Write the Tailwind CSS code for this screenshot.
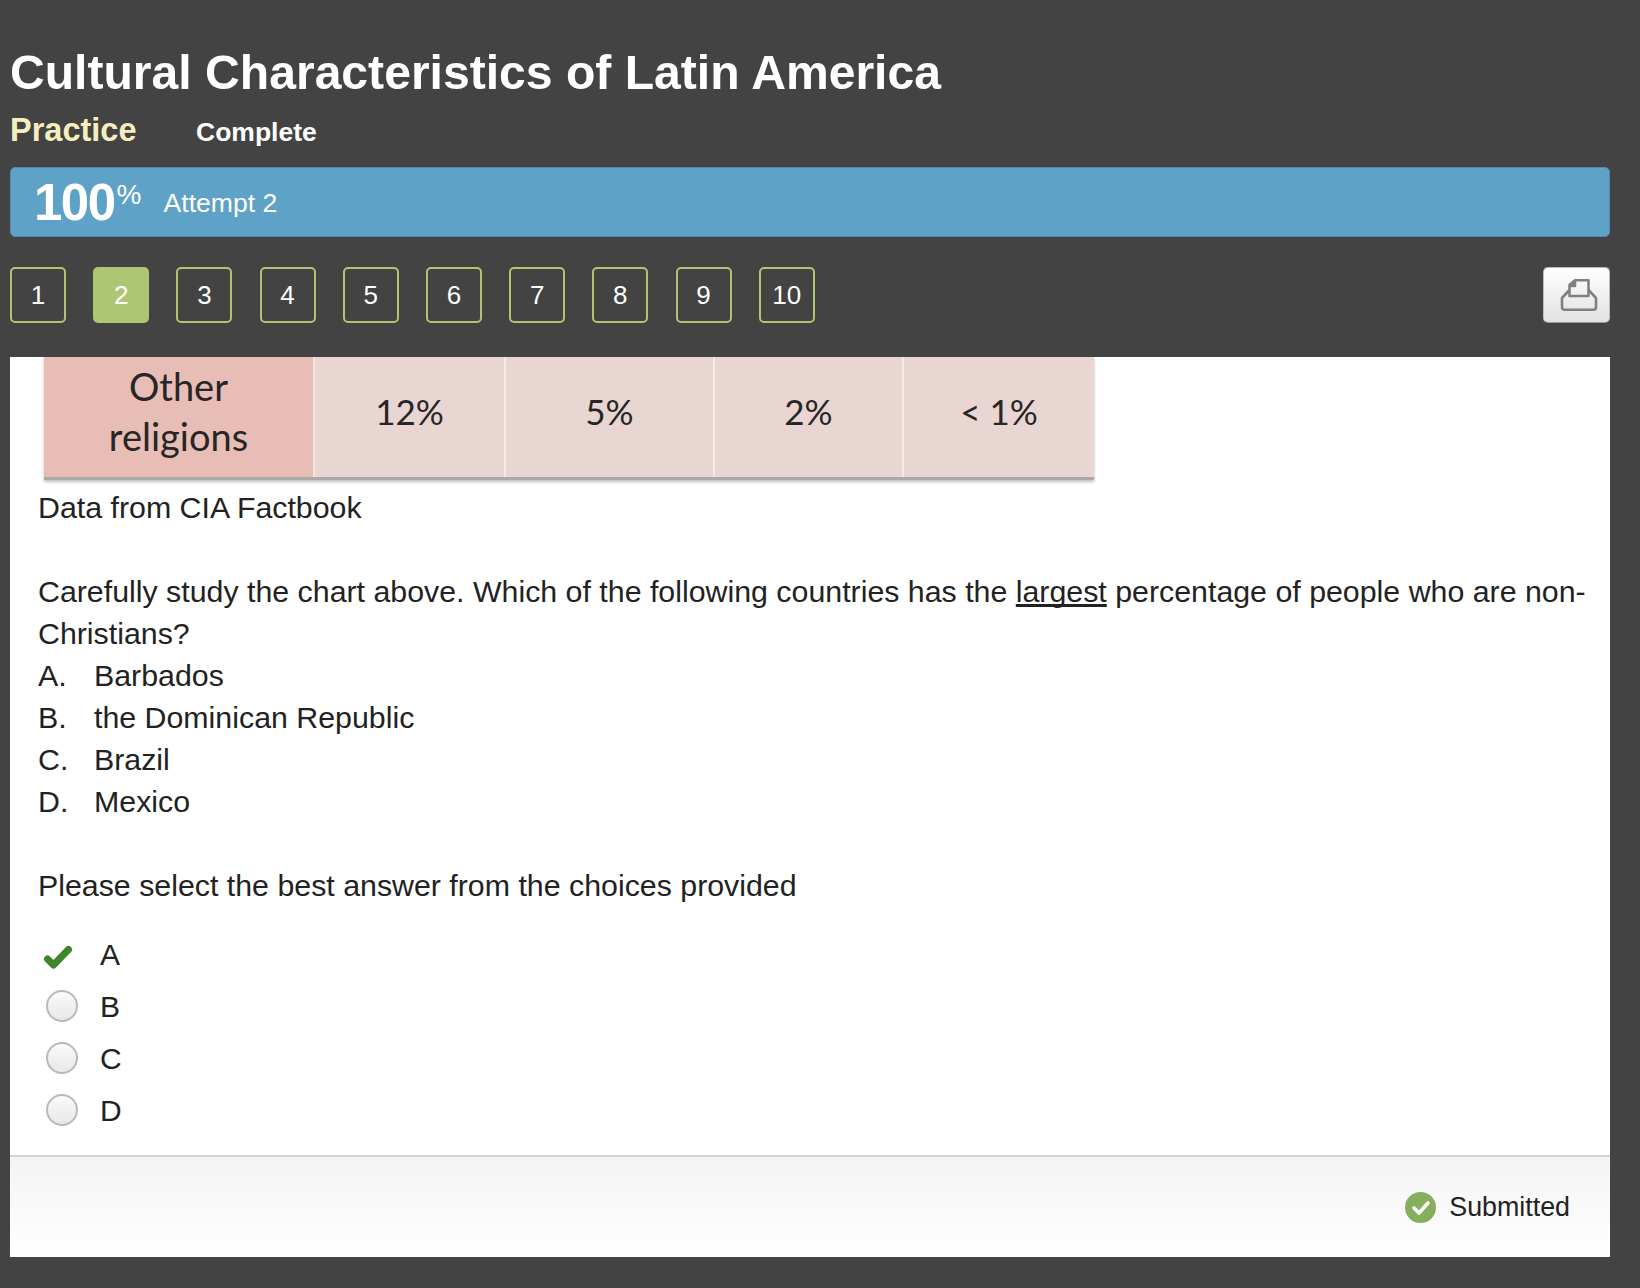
<!DOCTYPE html>
<html>
<head>
<meta charset="utf-8">
<script src="https://cdn.jsdelivr.net/npm/@tailwindcss/browser@4"></script>
</head>
<body class="m-0 bg-[#434343] font-['Liberation_Sans',Arial,sans-serif]">
<div class="w-[1640px] h-[1288px] overflow-hidden px-[10px] flex flex-col">
  <h1 class="mt-[40px] h-[64px] text-[48.1px] leading-[64px] font-bold text-white whitespace-nowrap">Cultural Characteristics of Latin America</h1>
  <div class="mt-[6px] h-[40px] flex items-center">
    <span class="text-[32.5px] font-bold text-[#f7eebf] leading-[40px] w-[186px]">Practice</span>
    <span class="text-[26.5px] font-bold text-white leading-[40px] mt-[4px]">Complete</span>
  </div>
  <div class="mt-[17px] h-[70px] w-[1600px] shrink-0 rounded-[5px] bg-[#5fa2c8] border border-[#4f8cb0] flex items-center pl-[23px] text-white">
    <span class="text-[51px] font-bold leading-none tracking-[-1.5px]">100</span>
    <span class="text-[28px] leading-none self-start mt-[13px] ml-[2px]">%</span>
    <span class="text-[26.6px] ml-[22px] mt-[4px]">Attempt 2</span>
  </div>
  <div class="mt-[30px] h-[56px] w-[1600px] flex items-start justify-between shrink-0">
    <div class="flex gap-[27.2px] text-[26px] text-white">
      <div class="w-[56px] h-[56px] rounded-[5px] border-2 border-[#aec671] flex items-center justify-center">1</div>
      <div class="w-[56px] h-[56px] rounded-[5px] border-2 border-[#aec671] bg-[#aec671] flex items-center justify-center">2</div>
      <div class="w-[56px] h-[56px] rounded-[5px] border-2 border-[#aec671] flex items-center justify-center">3</div>
      <div class="w-[56px] h-[56px] rounded-[5px] border-2 border-[#aec671] flex items-center justify-center">4</div>
      <div class="w-[56px] h-[56px] rounded-[5px] border-2 border-[#aec671] flex items-center justify-center">5</div>
      <div class="w-[56px] h-[56px] rounded-[5px] border-2 border-[#aec671] flex items-center justify-center">6</div>
      <div class="w-[56px] h-[56px] rounded-[5px] border-2 border-[#aec671] flex items-center justify-center">7</div>
      <div class="w-[56px] h-[56px] rounded-[5px] border-2 border-[#aec671] flex items-center justify-center">8</div>
      <div class="w-[56px] h-[56px] rounded-[5px] border-2 border-[#aec671] flex items-center justify-center">9</div>
      <div class="w-[56px] h-[56px] rounded-[5px] border-2 border-[#aec671] flex items-center justify-center">10</div>
    </div>
    <div class="w-[67px] h-[56px] rounded-[5px] bg-gradient-to-b from-white to-[#e2e2e2] border border-[#bbbbbb] border-b-[#999999] flex items-center justify-center">
      <svg class="ml-[4px]" width="38" height="33" viewBox="0 0 38 33" fill="none" stroke="#808080" stroke-width="2.6" stroke-linejoin="round"><path d="M9.5 17V6L15 1.3H28.5V17Z"/><path d="M9.5 7H15V1.5" fill="#808080"/><path d="M9.5 11L2 19V28Q2 30.7 4.5 30.7H33.5Q36 30.7 36 28V19L28.5 11"/></svg>
    </div>
  </div>
  <main class="mt-[34px] w-[1600px] h-[900px] shrink-0 bg-white flex flex-col text-[#222222] overflow-hidden">
    <div class="ml-[34px] w-[1050px] h-[123px] flex shrink-0 border-b-[3px] border-[#a9a9a9] font-['Lato',sans-serif] text-[35px] text-[#262626] shadow-[0_2px_3px_rgba(0,0,0,0.25)]">
      <div class="w-[271px] bg-[#e7bdb5] flex items-center justify-center text-center text-[38px] leading-[50px] border-r-2 border-[#f1e3e0] pb-[12px]">Other<br>religions</div>
      <div class="w-[191px] bg-[#e9d5d1] flex items-center justify-center border-r-2 border-[#f3e9e7] pb-[12px]">12%</div>
      <div class="w-[209px] bg-[#e9d5d1] flex items-center justify-center border-r-2 border-[#f3e9e7] pb-[12px]">5%</div>
      <div class="w-[189px] bg-[#e9d5d1] flex items-center justify-center border-r-2 border-[#f3e9e7] pb-[12px]">2%</div>
      <div class="w-[190px] bg-[#e9d5d1] flex items-center justify-center pb-[12px]">&lt; 1%</div>
    </div>
    <div class="pl-[28px] pt-[7px] text-[30.33px] leading-[42px] shrink-0">
      <p>Data from CIA Factbook</p>
      <p class="mt-[42px] w-[1572px]">Carefully study the chart above. Which of the following countries has the <u class="[text-decoration-skip-ink:none]">largest</u> percentage of people who are non-Christians?</p>
      <div class="flex"><span class="w-[56px]">A.</span><span>Barbados</span></div>
      <div class="flex"><span class="w-[56px]">B.</span><span>the Dominican Republic</span></div>
      <div class="flex"><span class="w-[56px]">C.</span><span>Brazil</span></div>
      <div class="flex"><span class="w-[56px]">D.</span><span>Mexico</span></div>
      <p class="mt-[42px]">Please select the best answer from the choices provided</p>
    </div>
    <div class="mt-[21px] pl-[36px] text-[30px] shrink-0 flex flex-col">
      <div class="h-[52px] flex items-center">
        <svg class="-ml-[4px] mt-[5px]" width="32" height="28" viewBox="0 0 32 28"><path d="M5.5 16L11.5 22L26.5 6.5" fill="none" stroke="#3f8529" stroke-width="7" stroke-linecap="round" stroke-linejoin="round"/></svg>
        <span class="ml-[26px]">A</span>
      </div>
      <div class="h-[52px] flex items-center"><span class="w-[32px] h-[32px] rounded-full border-2 border-[#b9b9b9] bg-gradient-to-b from-[#fafafa] to-[#e8e8e8]"></span><span class="ml-[22px]">B</span></div>
      <div class="h-[52px] flex items-center"><span class="w-[32px] h-[32px] rounded-full border-2 border-[#b9b9b9] bg-gradient-to-b from-[#fafafa] to-[#e8e8e8]"></span><span class="ml-[22px]">C</span></div>
      <div class="h-[52px] flex items-center"><span class="w-[32px] h-[32px] rounded-full border-2 border-[#b9b9b9] bg-gradient-to-b from-[#fafafa] to-[#e8e8e8]"></span><span class="ml-[22px]">D</span></div>
    </div>
    <div class="mt-auto h-[102px] shrink-0 border-t-2 border-[#d4d4d4] bg-gradient-to-b from-[#f4f4f4] to-white flex items-center justify-end pr-[40px]">
      <svg width="31" height="31" viewBox="0 0 31 31"><circle cx="15.5" cy="15.5" r="15.5" fill="#86ae5f"/><path d="M9 16L14 21L23 11" fill="none" stroke="#fff" stroke-width="3.6" stroke-linecap="round" stroke-linejoin="round"/></svg>
      <span class="ml-[13px] text-[26.8px]">Submitted</span>
    </div>
  </main>
</div>
</body>
</html>
